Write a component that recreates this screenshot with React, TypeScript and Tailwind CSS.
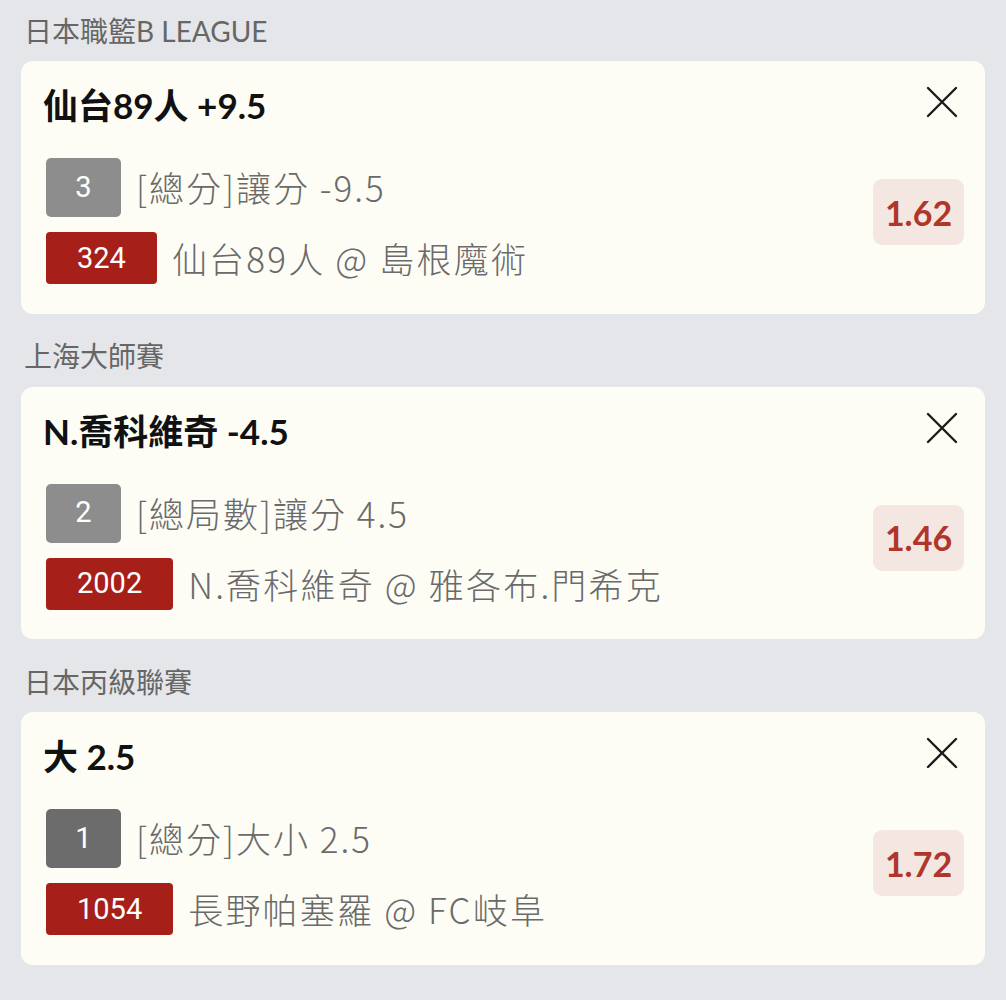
import React from "react";

type Bet = {
  league: string;
  title: string;
  rank: string;
  rankDark?: boolean;
  market: string;
  code: string;
  match: string;
  odds: string;
};

const bets: Bet[] = [
  { league: "日本職籃B LEAGUE", title: "仙台89人 +9.5", rank: "3", market: "[總分]讓分 -9.5", code: "324", match: "仙台89人 @ 島根魔術", odds: "1.62" },
  { league: "上海大師賽", title: "N.喬科維奇 -4.5", rank: "2", market: "[總局數]讓分 4.5", code: "2002", match: "N.喬科維奇 @ 雅各布.門希克", odds: "1.46" },
  { league: "日本丙級聯賽", title: "大 2.5", rank: "1", rankDark: true, market: "[總分]大小 2.5", code: "1054", match: "長野帕塞羅 @ FC岐阜", odds: "1.72" },
];

const latin = "font-['Lato','Noto_Sans_CJK_TC',sans-serif]";
const cjk = "font-['Noto_Sans_CJK_TC','Noto_Sans',sans-serif]";

function CloseIcon() {
  return (
    <svg width="32" height="32" viewBox="0 0 32 32" fill="none" stroke="#1c1c1c" strokeWidth="2.4" strokeLinecap="round">
      <path d="M2 2 30 30M30 2 2 30" />
    </svg>
  );
}

function BetCard({ bet }: { bet: Bet }) {
  return (
    <div className="flex rounded-[12px] bg-[#fdfdf6] pt-[24px] pb-[29px] pl-[22px] pr-[21px]">
      <div className="flex-1 min-w-0">
        <div className={`${latin} text-[35px] leading-[40px] font-bold text-[#111]`}>{bet.title}</div>
        <div className="mt-[33px] ml-[3px] flex flex-col gap-[15px]">
          <div className="flex items-center gap-[15px]">
            <div
              className={`w-[75px] h-[59px] rounded-[5px] flex items-center justify-center font-['Roboto',sans-serif] text-[29px] text-white ${
                bet.rankDark ? "bg-[#6c6c6c]" : "bg-[#8d8d8d]"
              }`}
            >
              {bet.rank}
            </div>
            <div className={`${cjk} font-light text-[35px] tracking-[2px] text-[#6a6a6a]`}>{bet.market}</div>
          </div>
          <div className="flex items-center gap-[15px]">
            <div className="h-[52px] px-[31px] rounded-[4px] bg-[#a61f18] flex items-center justify-center font-['Roboto',sans-serif] text-[29px] text-white">
              {bet.code}
            </div>
            <div className={`${cjk} font-light text-[35px] tracking-[2.2px] text-[#6a6a6a]`}>{bet.match}</div>
          </div>
        </div>
      </div>
      <div className="flex flex-col items-end">
        <div className="mt-[1px] mr-[6px]">
          <CloseIcon />
        </div>
        <div className="mt-[61px] w-[91px] h-[66px] rounded-[9px] bg-[#f4e6e0] flex items-center justify-center">
          <span className="font-['Lato',sans-serif] font-bold text-[34px] text-[#b0362b]">{bet.odds}</span>
        </div>
      </div>
    </div>
  );
}

export default function App() {
  return (
    <div className="min-h-screen w-full bg-[#e5e6e9] px-[21px] pb-[36px]">
      {bets.map((bet, i) => (
        <section key={i} className={i > 0 ? "mt-[12px]" : ""}>
          <div className={`h-[61px] flex items-center pl-[3px] ${latin} text-[28px] text-[#666]`}>{bet.league}</div>
          <BetCard bet={bet} />
        </section>
      ))}
    </div>
  );
}
